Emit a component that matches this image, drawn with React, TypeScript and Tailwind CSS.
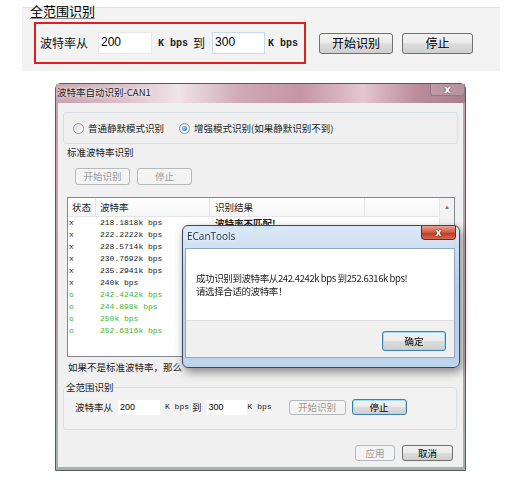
import React from "react";

const cn = "font-['Noto_Sans_CJK_SC',sans-serif]";
const mono = "font-['Liberation_Mono',monospace]";

type Row = { s: string; rate: string; ok: boolean; result?: string };

// only the first result is visible above the message box
const rows: Row[] = [
  { s: "x", rate: "218.1818k bps", ok: false, result: "波特率不匹配!" },
  { s: "x", rate: "222.2222k bps", ok: false },
  { s: "x", rate: "228.5714k bps", ok: false },
  { s: "x", rate: "230.7692k bps", ok: false },
  { s: "x", rate: "235.2941k bps", ok: false },
  { s: "x", rate: "240k bps", ok: false },
  { s: "o", rate: "242.4242k bps", ok: true },
  { s: "o", rate: "244.898k bps", ok: true },
  { s: "o", rate: "250k bps", ok: true },
  { s: "o", rate: "252.6316k bps", ok: true },
];

function Radio({ checked }: { checked?: boolean }) {
  return (
    <span className="flex h-[11px] w-[11px] shrink-0 items-center justify-center rounded-full border border-[#9a9a9a] bg-[linear-gradient(135deg,#dcdcdc,#fbfbfb)]">
      {checked && <span className="h-[5px] w-[5px] rounded-full bg-[radial-gradient(circle_at_35%_35%,#9fd8fa,#1b5fa8)]" />}
    </span>
  );
}

function Btn({
  children,
  className = "",
  disabled,
  focused,
}: {
  children: React.ReactNode;
  className?: string;
  disabled?: boolean;
  focused?: boolean;
}) {
  const look = disabled
    ? "border-[#b5b9bc] bg-[#f4f4f4] text-[#9a9a9a]"
    : focused
    ? "border-[#3c7fb1] text-black shadow-[inset_0_0_0_1px_#9fdcf7] bg-[linear-gradient(#f2f2f2_0%,#ebebeb_50%,#dddddd_50%,#cfcfcf_100%)]"
    : "border-[#707070] text-black bg-[linear-gradient(#f2f2f2_0%,#ebebeb_50%,#dddddd_50%,#cfcfcf_100%)]";
  return (
    <div className={`flex shrink-0 items-center justify-center rounded-[3px] border ${look} ${cn} ${className}`}>
      {children}
    </div>
  );
}

function MessageBox() {
  return (
    <div className="absolute left-[126px] top-[141px] flex h-[143px] w-[278px] flex-col rounded-[6px] border border-[#34475c] bg-[linear-gradient(180deg,rgba(214,230,246,0.88),rgba(176,204,234,0.9)_45%,rgba(186,210,236,0.95))] pb-[9px] pl-[2px] pr-[4px] shadow-[2px_4px_10px_rgba(0,0,0,0.45)] backdrop-blur-[1.5px]">
      <div className="flex h-[22px] items-start justify-between">
        <span className="ml-[2px] mt-[3px] font-['Open_Sans',sans-serif] text-[10px] leading-[14px] text-[#1b2c3f] [text-shadow:0_0_5px_white]">
          ECanTools
        </span>
        <div className="-mr-[1px] flex h-[14px] w-[35px] items-center justify-center rounded-b-[4px] border border-t-0 border-[#6d2a22] bg-[linear-gradient(180deg,#e9a596,#d0573f_50%,#c03a22_55%,#d46a52)] font-['DejaVu_Sans',sans-serif] text-[10px] font-bold leading-none text-white [text-shadow:0_0_2px_#5a1a10]">
          x
        </div>
      </div>
      <div className="flex flex-1 flex-col border border-[#8ea8c4]">
        <div className={`h-[71px] bg-white pl-[10px] pt-[23px] text-[9.5px] leading-[13px] tracking-[-0.4px] text-[#222] ${cn}`}>
          <div>成功识别到波特率从242.4242k bps 到252.6316k bps!</div>
          <div>请选择合适的波特率！</div>
        </div>
        <div className="flex flex-1 items-center justify-end border-t border-[#dfdfdf] bg-[#f0f0f0] pr-[8px] pt-[4px]">
          <Btn focused className="h-[20px] w-[64px] text-[9.5px]">
            确定
          </Btn>
        </div>
      </div>
    </div>
  );
}

export default function App() {
  return (
    <div className="h-[488px] w-[522px] overflow-hidden bg-white">
      {/* zoomed detail of the full-range group */}
      <div className="h-[76px] pl-[22px] pt-[7px]">
        <div className="h-[64px] w-[478px] border-t border-[#e2e2e2] bg-[#f3f3f3]">
          <div className={`${cn} -mt-[5px] ml-[8px] w-fit border-b border-[#8a8a8a] text-[13px] leading-[15px] text-black`}>
            全范围识别
          </div>
          <div className="ml-[12px] mt-[3px] flex items-center">
            <div className="flex h-[42px] w-[272px] shrink-0 items-center border-2 border-[#e11d1d] pl-[4px]">
              <span className={`${cn} text-[12px] text-[#111]`}>波特率从</span>
              <div className="ml-[10px] h-[22px] w-[54px] border border-[#e8e8e8] bg-white pl-[2px] font-['Liberation_Sans',sans-serif] text-[12px] leading-[19px]">
                200
              </div>
              <span className={`${mono} ml-[6px] text-[10px] font-bold text-[#222]`}>K bps</span>
              <span className={`${cn} ml-[5px] text-[12px] text-[#111]`}>到</span>
              <div className="ml-[7px] h-[22px] w-[53px] border border-[#c5dbef] bg-white pl-[2px] font-['Liberation_Sans',sans-serif] text-[12px] leading-[19px]">
                300
              </div>
              <span className={`${mono} ml-[3px] text-[10px] font-bold text-[#222]`}>K bps</span>
            </div>
            <Btn className="ml-[13px] h-[21px] w-[74px] text-[12px]">开始识别</Btn>
            <Btn className="ml-[9px] h-[21px] w-[71px] text-[12px]">停止</Btn>
          </div>
        </div>
      </div>

      {/* dialog window */}
      <div className="relative ml-[55px] mt-[7px] flex h-[388px] w-[411px] flex-col rounded-t-[6px] border border-[#5d5660] bg-[linear-gradient(180deg,#c9a1b0,#b9a0ab_60%,#9db7ab)] px-[2px] pb-[3px]">
        <div className="-mx-[2px] flex h-[19px] items-start justify-between bg-[linear-gradient(90deg,#c7a1ae_0%,#d9bcc6_15%,#f0e4e8_30%,#cfa9b6_45%,#c595a5_60%,#e4c6d0_75%,#bb8d9c_88%,#a97f8e_100%)] px-[2px]">
          <span className={`${cn} -ml-[1px] mt-[1px] text-[9.5px] leading-[15px] text-[#222] [text-shadow:0_0_6px_#fff,0_0_3px_#fff]`}>
            波特率自动识别-CAN1
          </span>
          <div className="-mr-[2px] flex h-[12px] w-[35px] items-center justify-center rounded-b-[3px] border border-t-0 border-[#8e7c88] bg-[rgba(255,255,255,0.15)] font-['DejaVu_Sans',sans-serif] text-[10px] font-bold leading-none text-white [text-shadow:0_0_2px_#444]">
            x
          </div>
        </div>

        <div className="flex flex-1 flex-col bg-[#f0f0f0]">
          <div className="ml-[5px] mt-[9px] flex h-[32px] w-[395px] items-center rounded-[3px] border border-[#d5dfe5] pl-[9px]">
            <Radio />
            <span className={`${cn} ml-[4px] text-[9.5px] text-[#222]`}>普通静默模式识别</span>
            <span className="ml-[15px]">
              <Radio checked />
            </span>
            <span className={`${cn} ml-[4px] text-[9.5px] text-[#222]`}>增强模式识别(如果静默识别不到)</span>
          </div>

          <div className={`${cn} ml-[9px] mt-[1px] text-[9.5px] leading-[14px] text-[#222]`}>标准波特率识别</div>

          <div className="ml-[17px] mt-[9px] flex gap-[7px]">
            <Btn disabled className="h-[17px] w-[55px] text-[9.5px]">开始识别</Btn>
            <Btn disabled className="h-[17px] w-[55px] text-[9.5px]">停止</Btn>
          </div>

          <div className="ml-[9px] mt-[12px] flex h-[160px] w-[388px] border border-[#828790] bg-white">
            <div className="flex-1">
              <div className={`${cn} grid h-[19px] grid-cols-[28px_114px_155px_1fr] border-b border-[#e5e5e5] bg-[linear-gradient(#ffffff,#f5f6f7)] text-[9.5px] leading-[18px] text-[#222]`}>
                <div className="border-r border-[#e5e5e5] pl-[4px]">状态</div>
                <div className="border-r border-[#e5e5e5] pl-[4px]">波特率</div>
                <div className="border-r border-[#e5e5e5] pl-[5px]">识别结果</div>
                <div />
              </div>
              {rows.map((r) => (
                <div key={r.rate} className={`grid h-[12px] grid-cols-[28px_114px_155px_1fr] items-center ${r.ok ? "text-[#45b536]" : "text-[#222]"}`}>
                  <div className={`${mono} pl-[1px] text-[8px]`}>{r.s}</div>
                  <div className={`${mono} pl-[4px] text-[8px]`}>{r.rate}</div>
                  <div className={`${cn} pl-[5px] text-[9.5px] font-bold leading-[12px]`}>{r.result}</div>
                  <div />
                </div>
              ))}
            </div>
            <div className="flex w-[15px] flex-col border-l border-[#e8e8e8] bg-[#f3f3f3]">
              <div className="flex h-[18px] items-center justify-center text-[6px] text-[#777]">▲</div>
            </div>
          </div>

          <div className={`${cn} ml-[10px] mt-[3px] text-[9.5px] leading-[14px] text-[#222]`}>如果不是标准波特率，那么</div>

          <fieldset className="ml-[5px] mt-[6px] h-[50px] w-[394px] rounded-[3px] border border-[#d5dfe5] bg-[#f2f2f2]">
            <legend className={`${cn} ml-[2px] bg-[#f0f0f0] text-[9.5px] leading-[14px] text-[#222]`}>全范围识别</legend>
            <div className="mt-[4px] flex h-[18px] items-center pl-[11px]">
              <span className={`${cn} text-[9.5px] text-[#222]`}>波特率从</span>
              <div className="ml-[5px] h-[15px] w-[42px] bg-white pl-[2px] font-['Liberation_Sans',sans-serif] text-[9px] leading-[14px]">200</div>
              <span className={`${mono} ml-[5px] text-[8px] text-[#222]`}>K bps</span>
              <span className={`${cn} ml-[3px] text-[9.5px] text-[#222]`}>到</span>
              <div className="ml-[5px] h-[15px] w-[40px] bg-white pl-[2px] font-['Liberation_Sans',sans-serif] text-[9px] leading-[14px]">300</div>
              <span className={`${mono} ml-[1px] text-[8px] text-[#222]`}>K bps</span>
              <Btn disabled className="ml-[17px] h-[15px] w-[57px] text-[9.5px]">开始识别</Btn>
              <Btn focused className="ml-[6px] h-[16px] w-[55px] text-[9.5px]">停止</Btn>
            </div>
          </fieldset>

          <div className="mr-[10px] mt-[15px] flex justify-end gap-[7px]">
            <Btn disabled className="h-[16px] w-[40px] text-[9.5px]">应用</Btn>
            <Btn className="h-[16px] w-[51px] text-[9.5px]">取消</Btn>
          </div>
        </div>

        <MessageBox />
      </div>
    </div>
  );
}
